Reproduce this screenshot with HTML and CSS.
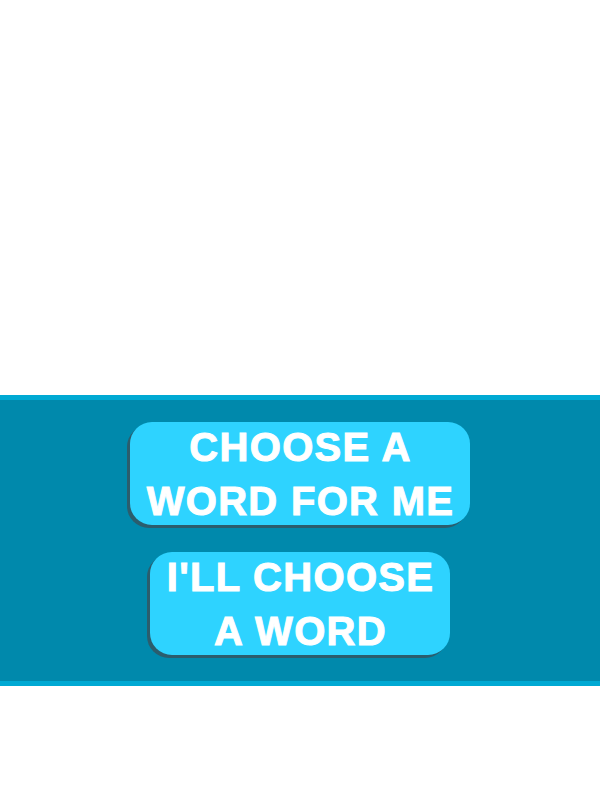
FILE: index.html
```html
<!DOCTYPE html>
<html lang="en">
<head>
<meta charset="utf-8">
<title>Choose a word</title>
<link rel="stylesheet" href="styles.css">
</head>
<body>
<div class="top-space"></div>
<section class="panel">
  <button class="choice">CHOOSE A<br>WORD FOR ME</button>
  <button class="choice">I'LL CHOOSE<br>A WORD</button>
</section>
</body>
</html>
```

FILE: styles.css
```css
html, body {
  margin: 0;
  padding: 0;
  background: #ffffff;
}

.top-space {
  height: 395px;
}

.panel {
  background: #0089ac;
  border-top: 5px solid #00a9d3;
  border-bottom: 5px solid #00a9d3;
  padding: 22px 0 26px;
  display: flex;
  flex-direction: column;
  align-items: center;
  gap: 27px;
}

.choice {
  height: 103px;
  padding: 0 16px 0 17px;
  margin: 0;
  border: none;
  border-radius: 22px;
  background: #2ed3ff;
  box-shadow: -3px 3px 0 #2b5d6d;
  color: #ffffff;
  font-family: "Liberation Sans", Arial, sans-serif;
  font-weight: bold;
  font-size: 40px;
  line-height: 54px;
  letter-spacing: 1.3px;
  -webkit-text-stroke: 1px #ffffff;
  text-align: center;
  display: flex;
  align-items: center;
  justify-content: center;
  cursor: pointer;
}
```
